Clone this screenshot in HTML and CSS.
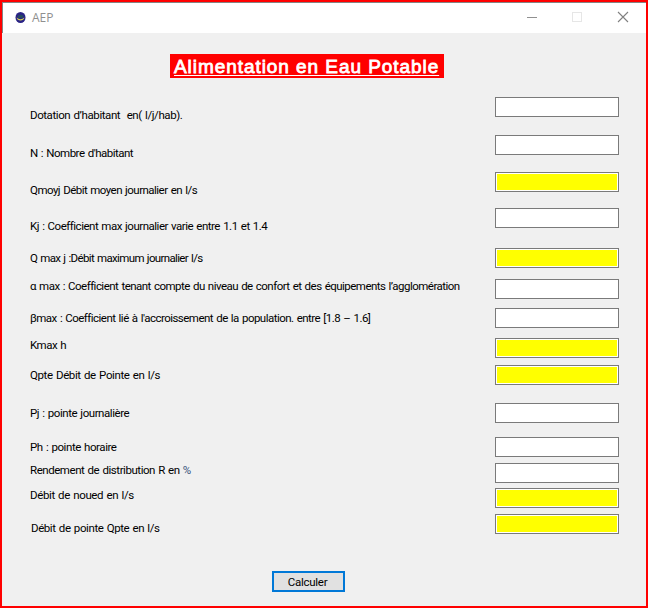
FILE: index.html
```
<!DOCTYPE html>
<html lang="fr">
<head>
<meta charset="utf-8">
<title>AEP</title>
<link rel="stylesheet" href="styles.css">
</head>
<body>
<main class="window">
  <header class="titlebar">
    <svg class="app-icon" width="12" height="12" viewBox="0 0 12 12">
      <ellipse cx="5.5" cy="5.5" rx="5" ry="5.5" fill="#2a2386"/>
      <path d="M2.5 4Q5.5 1.5 8.5 4L8 6H3z" fill="#25495f"/>
      <path d="M1.5 5.5Q5.5 9.1 9.5 5.5Q8.5 8.5 5.5 8.5Q2.5 8.5 1.5 5.5z" fill="#d9d552"/>
    </svg>
    <span class="caption">AEP</span>
    <div class="controls">
      <svg width="100" height="12" viewBox="0 0 100 12" fill="none">
        <path d="M0 5.5H10" stroke="#909090"/>
        <rect x="45.5" y="0.5" width="9" height="9" stroke="#e6e6e6"/>
        <path d="M91 0L101 10M101 0L91 10" stroke="#808080" stroke-width="1.1"/>
      </svg>
    </div>
  </header>
  <h1 class="heading">Alimentation en Eau Potable</h1>
  <section class="form">
    <div class="labels">
      <label class="l1">Dotation d’habitant  en( l/j/hab).</label>
      <label class="l2">N : Nombre d'habitant</label>
      <label class="l3">Qmoyj Débit moyen journalier en l/s</label>
      <label class="l4">Kj : Coefficient max journalier varie entre 1.1 et 1.4</label>
      <label class="l5">Q max j :Débit maximum journalier l/s</label>
      <label class="l6">α max : Coefficient tenant compte du niveau de confort et des équipements l’agglomération</label>
      <label class="l7">βmax : Coefficient lié à l'accroissement de la population. entre [1.8 – 1.6]</label>
      <label class="l8">Kmax h</label>
      <label class="l9">Qpte Débit de Pointe en l/s</label>
      <label class="l10">Pj : pointe journalière</label>
      <label class="l11">Ph : pointe horaire</label>
      <label class="l12">Rendement de distribution R en <span class="percent">%</span></label>
      <label class="l13">Débit de noued en l/s</label>
      <label class="l14">Débit de pointe Qpte en l/s</label>
    </div>
    <div class="fields">
      <input class="f1">
      <input class="f2">
      <input class="f3 result" readonly>
      <input class="f4">
      <input class="f5 result" readonly>
      <input class="f6">
      <input class="f7">
      <input class="f8 result" readonly>
      <input class="f9 result" readonly>
      <input class="f10">
      <input class="f11">
      <input class="f12">
      <input class="f13 result" readonly>
      <input class="f14 result" readonly>
    </div>
  </section>
  <button class="calc">Calculer</button>
</main>
</body>
</html>
```
FILE: styles.css
```
* { box-sizing: border-box; }
body { margin: 0; font: 11.5px/16px Roboto, sans-serif; color: #000; }
.window { display: flex; flex-direction: column; width: 648px; height: 608px; border: 2px solid #f00; background: #f0f0f0; }
.titlebar { display: flex; align-items: center; flex: none; height: 31px; padding-left: 12px; border-top: 1px solid #848484; border-left: 1px solid #848484; background: #fff; }
.app-icon { display: block; }
.caption { margin-left: 5px; font: 12px/16px "Open Sans", sans-serif; color: #8f8f8f; }
.controls { margin-left: auto; margin-right: 19px; }
.controls svg { display: block; overflow: visible; }
.heading { align-self: flex-start; width: 274px; height: 24px; margin: 21px 0 0 168px; padding-left: 4px; background: #f00; color: #fff; font: 19px/25px "Liberation Sans", sans-serif; letter-spacing: 0.94px; -webkit-text-stroke: 0.8px #fff; white-space: nowrap; text-decoration: underline; text-decoration-thickness: 1px; text-underline-offset: 2px; }
.form { display: flex; justify-content: space-between; align-items: flex-start; height: 440px; margin-top: 19px; padding: 0 27px 0 28px; }
.labels, .fields { display: flex; flex-direction: column; }
.labels { padding-top: 10px; }
label { height: 16px; white-space: pre; word-spacing: 0.8px; }
input { display: block; width: 124px; height: 20px; margin: 0; padding: 1px; border: 1px solid #7a7a7a; border-radius: 0; background: #fff; outline: 0; font: inherit; }
.result { background: #ff0; box-shadow: inset 0 0 0 1px #fff; }
.l1 { letter-spacing: -0.42px; }
.l2 { margin-top: 22px; letter-spacing: -0.5px; }
.l3 { margin-top: 21px; letter-spacing: -0.53px; }
.l4 { margin-top: 20px; letter-spacing: -0.49px; }
.l5 { margin-top: 16px; letter-spacing: -0.65px; }
.l6 { margin-top: 12px; letter-spacing: -0.525px; }
.l7 { margin-top: 16px; letter-spacing: -0.525px; }
.l8 { margin-top: 11px; letter-spacing: -0.5px; }
.l9 { margin-top: 14px; letter-spacing: -0.38px; }
.l10 { margin-top: 22px; letter-spacing: -0.45px; }
.l11 { margin-top: 18px; letter-spacing: -0.44px; }
.l12 { margin-top: 7px; letter-spacing: -0.45px; }
.l13 { margin-top: 9px; letter-spacing: -0.37px; }
.l14 { margin: 17px 0 0 1px; letter-spacing: -0.41px; }
.percent { color: #35527c; }
.f2 { margin-top: 18px; }
.f3 { margin-top: 17px; }
.f4 { margin-top: 16px; }
.f5 { margin-top: 20px; }
.f6 { margin-top: 11px; }
.f7 { margin-top: 9px; }
.f8 { margin-top: 10px; }
.f9 { margin-top: 7px; }
.f10 { margin-top: 18px; }
.f11 { margin-top: 14px; }
.f12 { margin-top: 6px; }
.f13 { margin-top: 5px; }
.f14 { margin-top: 6px; }
.calc { width: 73px; height: 21px; margin: 34px 0 0 270px; padding: 1px 2px 0 0; border: 2px solid #0078d7; border-radius: 0; background: #e1e1e1; color: #000; font: inherit; line-height: 16px; letter-spacing: -0.25px; text-align: center; }
```
